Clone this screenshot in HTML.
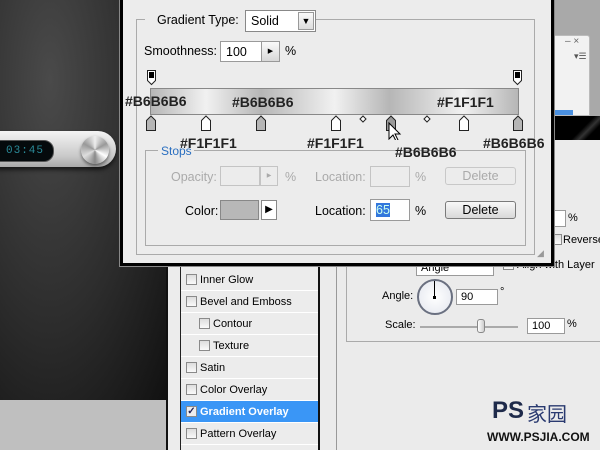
<!DOCTYPE html>
<html><head><style>
*{margin:0;padding:0;box-sizing:border-box}
body{width:600px;height:450px;overflow:hidden;position:relative;background:#ebebeb;font-family:"Liberation Sans",sans-serif;font-size:11px;color:#000}
.a{position:absolute}
.lbl{position:absolute;font-size:12.5px;white-space:nowrap}
.hx{position:absolute;font-family:"Liberation Sans",sans-serif;font-weight:bold;font-size:14px;color:#222;white-space:nowrap}
.box{position:absolute;background:#fff;border:1px solid #9a9a9a}
.btn{position:absolute;border:1px solid #7a7a7a;border-radius:3px;background:linear-gradient(#f8f8f8,#d8d8d8);text-align:center;font-size:12.5px;line-height:16px}
.row{position:absolute;left:181px;width:137px;height:22px;border-bottom:1px solid #fff;font-size:11px;line-height:22px}
.cb{position:absolute;width:11px;height:11px;border:1px solid #8a8a8a;background:linear-gradient(#ddd,#fafafa);top:5px}
</style></head><body>
<div class="a" style="left:0;top:0;width:166px;height:400px;background:radial-gradient(ellipse at 30% 20%,#4a4a4a 0%,#2c2c2c 55%,#111 100%)"></div>
<div class="a" style="left:0;top:400px;width:166px;height:50px;background:#bfbfbf"></div>
<div class="a" style="left:166px;top:260px;width:2px;height:190px;background:#111"></div>
<div class="a" style="left:168px;top:260px;width:12px;height:190px;background:#ececec"></div>
<div class="a" style="left:180px;top:260px;width:1px;height:190px;background:#222"></div>
<div class="a" style="left:181px;top:260px;width:137px;height:190px;background:#ececec"></div>
<div class="a" style="left:318px;top:260px;width:2px;height:190px;background:#111"></div>
<div class="a" style="left:336px;top:260px;width:1px;height:190px;background:#999"></div>
<div class="a" style="left:-20px;top:131px;width:136px;height:36px;border-radius:18px;background:linear-gradient(#f4f4f4,#c9c9c9 70%,#a8a8a8);box-shadow:0 3px 4px rgba(0,0,0,.6)"></div>
<div class="a" style="left:-10px;top:140px;width:64px;height:22px;border-radius:10px;background:#050a0c;border:1px solid #555"></div>
<div class="a" style="left:6px;top:145px;color:#2a8a98;font-family:'Liberation Mono',monospace;font-size:11px;letter-spacing:1px">03:45</div>
<div class="a" style="left:81px;top:136px;width:28px;height:28px;border-radius:50%;background:conic-gradient(#eee,#999,#fff,#888,#ddd,#999,#eee);box-shadow:0 2px 3px rgba(0,0,0,.5)"></div>
<div class="a" style="left:553px;top:0;width:47px;height:116px;background:#a9a9a9"></div>
<div class="a" style="left:551px;top:35px;width:39px;height:81px;background:#f2f2f2;border:1px solid #bbb;border-radius:3px 3px 0 0"></div>
<div class="a" style="left:565px;top:36px;font-size:10px;color:#666">– ×</div>
<div class="a" style="left:574px;top:51px;font-size:9px;color:#555">▾☰</div>
<div class="a" style="left:551px;top:110px;width:22px;height:5px;background:#4a90e0"></div>
<div class="a" style="left:551px;top:116px;width:49px;height:24px;background:linear-gradient(135deg,#000 60%,#333 70%,#000 80%)"></div>
<div class="box" style="left:552px;top:210px;width:14px;height:17px;border-left:none"></div>
<div class="lbl" style="left:568px;top:212px;font-size:11px">%</div>
<div class="cb" style="left:551px;top:234px"></div>
<div class="lbl" style="left:563px;top:234px;font-size:11px">Reverse</div>
<div class="a" style="left:346px;top:255px;width:260px;height:87px;border:1px solid #aaa;border-top:none"></div>
<div class="box" style="left:416px;top:262px;width:78px;height:14px;font-size:11px;line-height:10px;padding-left:4px">Angle</div>
<div class="cb" style="left:503px;top:259px"></div>
<div class="lbl" style="left:517px;top:259px;font-size:11px">Align with Layer</div>
<div class="lbl" style="left:382px;top:290px;font-size:11px">Angle:</div>
<div class="a" style="left:417px;top:279px;width:36px;height:36px;border-radius:50%;border:2px solid #6a7080;background:radial-gradient(#fff,#e3e6ee)"></div>
<div class="a" style="left:434px;top:281px;width:1px;height:16px;background:#000"></div>
<div class="a" style="left:433px;top:296px;width:3px;height:3px;background:#000"></div>
<div class="box" style="left:456px;top:289px;width:42px;height:16px;font-size:11px;padding:1px 4px">90</div>
<div class="lbl" style="left:500px;top:286px;font-size:11px">°</div>
<div class="lbl" style="left:385px;top:319px;font-size:11px">Scale:</div>
<div class="a" style="left:420px;top:326px;width:98px;height:2px;background:#aaa"></div>
<div class="a" style="left:477px;top:319px;width:8px;height:14px;border:1px solid #888;border-radius:3px;background:linear-gradient(90deg,#fff,#ccc)"></div>
<div class="box" style="left:527px;top:318px;width:38px;height:16px;font-size:11px;padding:1px 4px">100</div>
<div class="lbl" style="left:567px;top:318px;font-size:11px">%</div>
<div class="a" style="left:492px;top:397px;font-family:'Liberation Sans',sans-serif;font-weight:bold;font-size:24px;color:#1e2a4a">PS</div>
<div class="a" style="left:527px;top:398px;font-family:'Noto Sans CJK SC',sans-serif;font-size:20px;color:#2a3a70">家园</div>
<div class="a" style="left:487px;top:430px;font-family:'Liberation Sans',sans-serif;font-weight:bold;font-size:12px;color:#111">WWW.PSJIA.COM</div>
<div class="row" style="top:269px"><div class="cb" style="left:5px"></div><span style="position:absolute;left:19px">Inner Glow</span></div>
<div class="row" style="top:291px"><div class="cb" style="left:5px"></div><span style="position:absolute;left:19px">Bevel and Emboss</span></div>
<div class="row" style="top:313px"><div class="cb" style="left:18px"></div><span style="position:absolute;left:32px">Contour</span></div>
<div class="row" style="top:335px"><div class="cb" style="left:18px"></div><span style="position:absolute;left:32px">Texture</span></div>
<div class="row" style="top:357px"><div class="cb" style="left:5px"></div><span style="position:absolute;left:19px">Satin</span></div>
<div class="row" style="top:379px"><div class="cb" style="left:5px"></div><span style="position:absolute;left:19px">Color Overlay</span></div>
<div class="row" style="top:401px;background:#3a96f6;color:#fff;font-weight:bold"><div class="cb" style="left:5px;background:#eee;color:#225;font-size:10px;line-height:9px;text-align:center">✓</div><span style="position:absolute;left:19px">Gradient Overlay</span></div>
<div class="row" style="top:423px"><div class="cb" style="left:5px"></div><span style="position:absolute;left:19px">Pattern Overlay</span></div>

<div class="a" style="left:120px;top:-5px;width:434px;height:271px;background:#ececec;border:3px solid #000;outline:1px solid #888"></div>
<div class="a" style="left:136px;top:19px;width:399px;height:236px;border:1px solid #aaa"></div>
<div class="a" style="left:145px;top:12px;width:102px;height:14px;background:#ececec"></div>
<div class="lbl" style="left:157px;top:13px">Gradient Type:</div>
<div class="box" style="left:245px;top:10px;width:71px;height:22px;border-color:#888;font-size:12.5px;padding:3px 5px">Solid</div>
<div class="a" style="left:298px;top:12px;width:16px;height:18px;background:linear-gradient(#fafafa,#ddd);border:1px solid #999;text-align:center;font-size:9px;line-height:16px">▼</div>
<div class="lbl" style="left:144px;top:44px">Smoothness:</div>
<div class="box" style="left:220px;top:41px;width:42px;height:21px;font-size:12.5px;padding:3px 5px">100</div>
<div class="a" style="left:261px;top:41px;width:19px;height:21px;background:linear-gradient(#fafafa,#d8d8d8);border:1px solid #999;text-align:center;font-size:7px;line-height:19px">▶</div>
<div class="lbl" style="left:285px;top:44px">%</div>
<div class="a" style="left:150px;top:88px;width:369px;height:27px;border:1px solid #888;background:linear-gradient(90deg,#b6b6b6 0%,#f1f1f1 15%,#b6b6b6 30%,#f1f1f1 50%,#b6b6b6 65%,#f1f1f1 85%,#b6b6b6 100%)"></div>
<svg class="a" style="left:0;top:0" width="600" height="140">
<g stroke="#222" stroke-width="1">
<path d="M147.5 70.5h8v10l-4 4l-4-4z" fill="#fff"/><rect x="149" y="72" width="5" height="6" fill="#000" stroke="none"/>
<path d="M513.5 70.5h8v10l-4 4l-4-4z" fill="#fff"/><rect x="515" y="72" width="5" height="6" fill="#000" stroke="none"/>
<path d="M146.5 130.5h9v-10l-4.5-4.5l-4.5 4.5z" fill="#b6b6b6"/>
<path d="M201.5 130.5h9v-10l-4.5-4.5l-4.5 4.5z" fill="#fff"/>
<path d="M256.5 130.5h9v-10l-4.5-4.5l-4.5 4.5z" fill="#b6b6b6"/>
<path d="M331.5 130.5h9v-10l-4.5-4.5l-4.5 4.5z" fill="#fff"/>
<path d="M386.5 130.5h9v-10l-4.5-4.5l-4.5 4.5z" fill="#999"/>
<path d="M459.5 130.5h9v-10l-4.5-4.5l-4.5 4.5z" fill="#fff"/>
<path d="M513.5 130.5h9v-10l-4.5-4.5l-4.5 4.5z" fill="#b6b6b6"/>
<path d="M363 116l3 3l-3 3l-3-3z" fill="#fff"/>
<path d="M427 116l3 3l-3 3l-3-3z" fill="#fff"/>
</g>
<path d="M389 123v16l4-4l3 6l2-1l-3-6h5z" fill="#fff" stroke="#000"/>
</svg>
<div class="a" style="left:145px;top:150px;width:381px;height:96px;border:1px solid #aaa"></div>
<div class="a" style="left:158px;top:143px;width:36px;height:12px;background:#ececec"></div>
<div class="lbl" style="left:161px;top:144px;color:#2a6fc0;font-size:12px">Stops</div>
<div class="lbl" style="left:171px;top:170px;color:#aaa">Opacity:</div>
<div class="a" style="left:220px;top:166px;width:40px;height:20px;border:1px solid #c4c4c4"></div>
<div class="a" style="left:260px;top:166px;width:18px;height:20px;border:1px solid #c4c4c4;color:#aaa;font-size:6px;text-align:center;line-height:18px">▶</div>
<div class="lbl" style="left:285px;top:170px;color:#aaa">%</div>
<div class="lbl" style="left:315px;top:170px;color:#aaa">Location:</div>
<div class="a" style="left:370px;top:166px;width:40px;height:21px;border:1px solid #c4c4c4"></div>
<div class="lbl" style="left:415px;top:170px;color:#aaa">%</div>
<div class="btn" style="left:445px;top:167px;width:71px;height:18px;color:#aaa;border-color:#c8c8c8;background:#ececec">Delete</div>
<div class="lbl" style="left:185px;top:204px">Color:</div>
<div class="a" style="left:220px;top:200px;width:39px;height:20px;background:#b8b8b8;border:1px solid #888"></div>
<div class="a" style="left:261px;top:200px;width:16px;height:20px;border:1px solid #888;background:#fff;text-align:center;font-size:10px;line-height:18px">▶</div>
<div class="lbl" style="left:315px;top:204px">Location:</div>
<div class="box" style="left:370px;top:199px;width:40px;height:22px"></div>
<div class="a" style="left:376px;top:203px;width:14px;height:14px;background:#3377dd;color:#cfe;font-size:12.5px;line-height:14px">65</div>
<div class="lbl" style="left:415px;top:204px">%</div>
<div class="btn" style="left:445px;top:201px;width:71px;height:18px">Delete</div>
<div class="a" style="left:537px;top:248px;font-size:9px;color:#999">◢</div>
<div class="hx" style="left:125px;top:93px">#B6B6B6</div>
<div class="hx" style="left:232px;top:94px">#B6B6B6</div>
<div class="hx" style="left:437px;top:94px">#F1F1F1</div>
<div class="hx" style="left:180px;top:135px">#F1F1F1</div>
<div class="hx" style="left:307px;top:135px">#F1F1F1</div>
<div class="hx" style="left:395px;top:144px">#B6B6B6</div>
<div class="hx" style="left:483px;top:135px">#B6B6B6</div>
</body></html>
